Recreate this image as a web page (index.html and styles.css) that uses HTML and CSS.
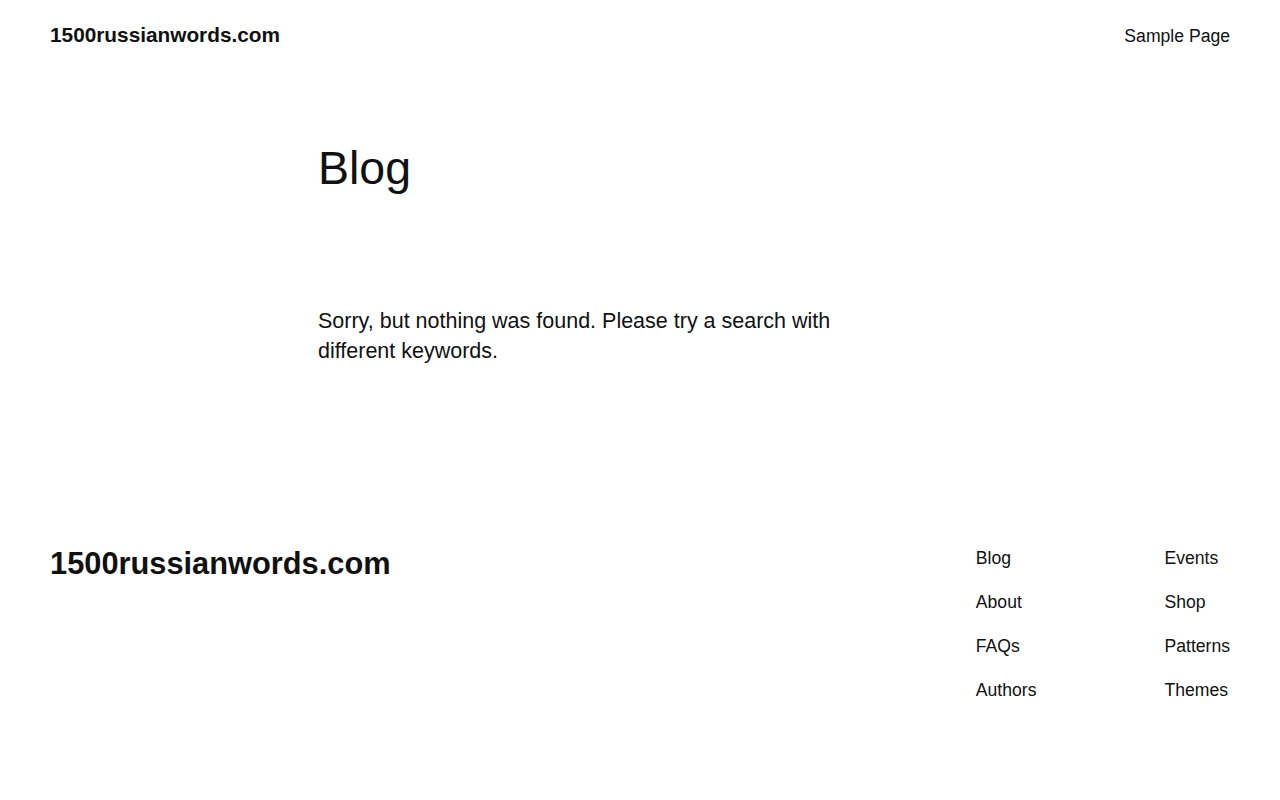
FILE: index.html
```html
<!DOCTYPE html>
<html lang="en">
<head>
<meta charset="utf-8">
<title>Blog – 1500russianwords.com</title>
<link rel="stylesheet" href="styles.css">
</head>
<body>
<header class="site-header">
  <a class="site-title" href="#">1500russianwords.com</a>
  <nav class="header-nav"><a href="#">Sample Page</a></nav>
</header>
<main class="main">
  <h1 class="page-title">Blog</h1>
  <p class="empty">Sorry, but nothing was found. Please try a search with different keywords.</p>
</main>
<footer class="site-footer">
  <a class="footer-title" href="#">1500russianwords.com</a>
  <div class="footer-nav">
    <ul class="footer-col">
      <li><a href="#">Blog</a></li>
      <li><a href="#">About</a></li>
      <li><a href="#">FAQs</a></li>
      <li><a href="#">Authors</a></li>
    </ul>
    <ul class="footer-col">
      <li><a href="#">Events</a></li>
      <li><a href="#">Shop</a></li>
      <li><a href="#">Patterns</a></li>
      <li><a href="#">Themes</a></li>
    </ul>
  </div>
</footer>
</body>
</html>
```
FILE: styles.css
```css
* { box-sizing: border-box; }
html, body { margin: 0; padding: 0; background: #fff; }
body {
  font-family: "Liberation Sans", Arial, sans-serif;
  color: #111;
}
a { color: #111; text-decoration: none; }

.site-header {
  display: flex;
  justify-content: space-between;
  align-items: flex-start;
  padding: 20.5px 50px 0;
  height: 70px;
}
.site-title {
  font-size: 20.8px;
  font-weight: 700;
  line-height: 28px;
}
.header-nav {
  padding-top: 1px;
}
.header-nav a {
  font-size: 17.6px;
  line-height: 28px;
}

.main {
  width: 644px;
  margin: 0 auto;
}
.page-title {
  margin: 66.5px 0 0;
  font-size: 46.5px;
  font-weight: 400;
  line-height: 62px;
}
.empty {
  margin: 107px 0 0;
  font-size: 21.5px;
  line-height: 30px;
  max-width: 540px;
}

.site-footer {
  display: flex;
  justify-content: space-between;
  align-items: flex-start;
  padding: 0 50px;
  margin-top: 178px;
}
.footer-title {
  font-size: 30.8px;
  font-weight: 700;
  line-height: 40px;
}
.footer-nav {
  display: flex;
  gap: 128px;
  padding-top: 2px;
}
.footer-col {
  list-style: none;
  margin: 0;
  padding: 0;
  display: flex;
  flex-direction: column;
  gap: 20.3px;
}
.footer-col a {
  font-size: 17.6px;
  line-height: 24px;
}
```
